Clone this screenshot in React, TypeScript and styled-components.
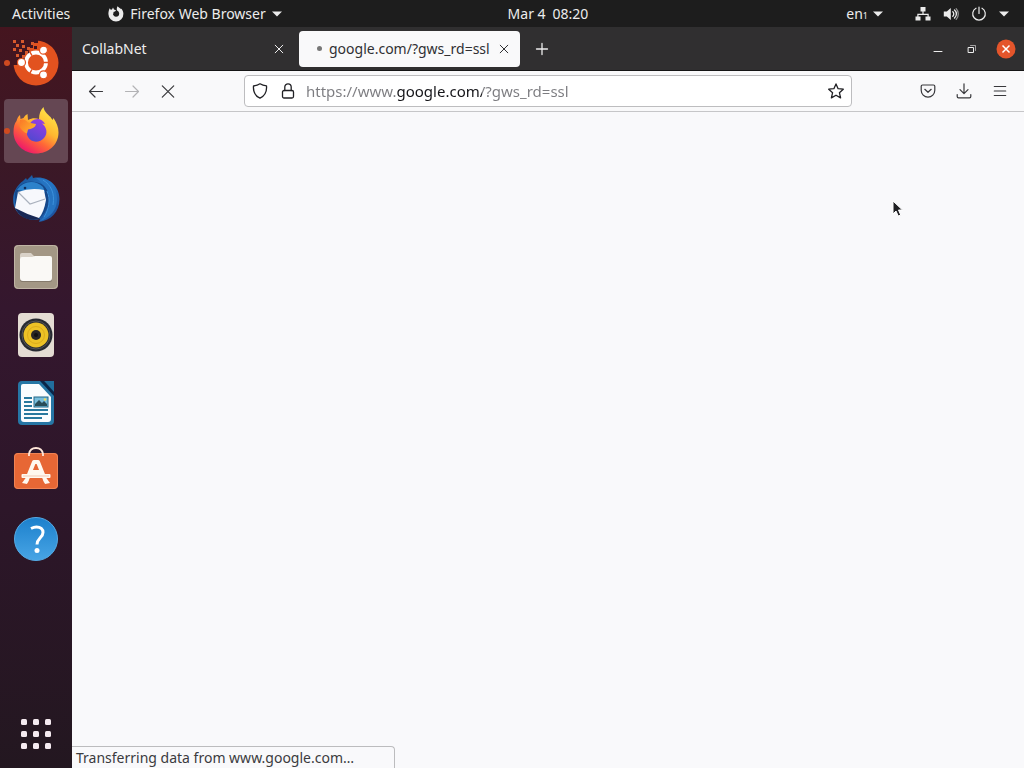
import React from "react";
import styled, { createGlobalStyle } from "styled-components";

const GlobalStyle = createGlobalStyle`
  *, *::before, *::after { box-sizing: border-box; }
  body { margin: 0; background: #f9f9fb; }
  body, button, input { font-family: "Noto Sans", "Open Sans", sans-serif; font-size: 14px; line-height: 20px; }
  button { margin: 0; padding: 0; border: 0; background: none; color: inherit; cursor: default; }
  svg { display: block; flex: none; }
`;

const Desktop = styled.div`
  display: flex;
  flex-direction: column;
  min-height: 100vh;
`;

const TopBar = styled.header`
  display: grid;
  grid-template-columns: 72px 1fr auto 1fr;
  align-items: center;
  height: 27px;
  background: #1d1d1d;
  color: #ececec;
`;

const TopLeft = styled.nav`
  grid-column: 1 / 3;
  display: flex;
  align-items: center;
  gap: 38px;
  padding-left: 12px;
`;

const TopRight = styled.div`
  display: flex;
  align-items: center;
  justify-content: flex-end;
  gap: 32px;
  padding-right: 15px;
`;

const TopButton = styled.button<{ $gap?: number }>`
  display: flex;
  align-items: center;
  gap: ${(p) => p.$gap ?? 6}px;
  white-space: nowrap;
`;

const Subscript = styled.span`
  font-size: 9px;
  line-height: 12px;
  padding-top: 4px;
`;

const Workspace = styled.div`
  display: flex;
  flex: 1;
`;

const Dock = styled.nav`
  display: flex;
  flex-direction: column;
  gap: 4px;
  width: 72px;
  padding: 4px 4px 2px;
  background: linear-gradient(180deg, #45151f 0%, #3b1826 18%, #34172e 38%, #2d1629 65%, #231720 100%);
`;

const DockItem = styled.button<{ $active?: boolean; $running?: boolean; $last?: boolean }>`
  position: relative;
  display: grid;
  place-items: center;
  height: 64px;
  border-radius: 4px;
  margin-top: ${(p) => (p.$last ? "auto" : "0")};
  background: ${(p) => (p.$active ? "#654753" : "transparent")};
  &::before {
    content: "";
    display: ${(p) => (p.$running ? "block" : "none")};
    position: absolute;
    left: 0;
    top: 29px;
    width: 6px;
    height: 6px;
    border-radius: 50%;
    background: #cf4a20;
  }
`;

const Browser = styled.main`
  display: flex;
  flex-direction: column;
  flex: 1;
  min-width: 0;
`;

const TitleBar = styled.div`
  display: flex;
  align-items: center;
  gap: 4px;
  height: 44px;
  padding: 0 6px 0 2px;
  background: #302f30;
  border-bottom: 1px solid #151515;
  color: #ededed;
`;

const Tab = styled.div<{ $active?: boolean }>`
  display: flex;
  align-items: center;
  gap: 2px;
  width: 221px;
  height: 36px;
  padding: 0 6px 0 8px;
  border-radius: 4px;
  background: ${(p) => (p.$active ? "#f9f9fa" : "transparent")};
  color: ${(p) => (p.$active ? "#303033" : "#ededed")};
`;

const TabLabel = styled.button`
  display: flex;
  align-items: center;
  flex: 1;
  min-width: 0;
  white-space: nowrap;
`;

const LoadingDot = styled.span`
  width: 5px;
  height: 5px;
  margin: 0 7px 0 10px;
  border-radius: 50%;
  background: #777;
`;

const IconButton = styled.button<{ $size?: number; $faded?: boolean }>`
  display: grid;
  place-items: center;
  flex: none;
  width: ${(p) => p.$size ?? 36}px;
  height: ${(p) => p.$size ?? 36}px;
  color: ${(p) => (p.$faded ? "#b3b3b5" : "inherit")};
`;

const WindowControls = styled.div`
  display: flex;
  gap: 10px;
  margin-left: auto;
`;

const Toolbar = styled.div`
  display: flex;
  align-items: center;
  height: 41px;
  padding: 0 6px;
  background: #f9f9fa;
  border-bottom: 1px solid #c6c6c8;
  color: #38383b;
`;

const AddressBar = styled.form`
  display: flex;
  align-items: center;
  flex: 1;
  height: 32px;
  margin: 0 58px;
  padding-left: 1px;
  border: 1px solid #bdbdbf;
  border-radius: 4px;
  background: #fff;
  color: #202024;
`;

const AddressInput = styled.input`
  flex: 1;
  min-width: 0;
  height: 24px;
  padding: 0 0 0 4px;
  border: 0;
  outline: 0;
  font-size: 15px;
  color: transparent;
  background: linear-gradient(90deg, #7c7c80 95px, #151519 95px, #151519 180px, #7c7c80 180px);
  background-clip: text;
  -webkit-background-clip: text;
`;

const Page = styled.section`
  display: flex;
  flex: 1;
  align-items: flex-end;
  background: #f9f9fb;
`;

const StatusPanel = styled.div`
  width: 323px;
  height: 22px;
  padding: 1px 4px 0;
  border: 1px solid #bcbcbe;
  border-width: 1px 1px 0 0;
  border-top-right-radius: 4px;
  color: #3b3b3e;
  white-space: nowrap;
`;

const Pointer = styled.svg`
  position: fixed;
  left: 891px;
  top: 199px;
  pointer-events: none;
`;

type GlyphProps = { children: React.ReactNode; size?: number; width?: number };

const Glyph = ({ children, size = 16, width = 1 }: GlyphProps) => (
  <svg width={size} height={size} viewBox="0 0 16 16" fill="none" stroke="currentColor" strokeWidth={width} strokeLinecap="round" strokeLinejoin="round" aria-hidden="true">
    {children}
  </svg>
);

const Caret = () => (
  <svg width="10" height="6" viewBox="0 0 10 6" fill="currentColor" aria-hidden="true">
    <path d="M0 .5h10L5 5.5z" />
  </svg>
);

const CrossSmall = () => (
  <Glyph><path d="M4.2 4.2l7.6 7.6M11.8 4.2l-7.6 7.6" /></Glyph>
);

const FirefoxSymbol = () => (
  <svg width="16" height="16" viewBox="0 0 16 16" fill="currentColor" aria-hidden="true">
    <path d="M1.800 2.200l.9 1.500 1.300-.3L5 1.500l1 1.900 2 .8c-.4 1.200-1.600 1.500-2.700 1.700l.4 1.200-.8 1c.4 1.700 1.600 2.600 3.100 2.600 1.900 0 3.200-1.300 3.200-3 0-1.600-.8-2.600-2.200-3.300C8.600 3 8.800 1.500 9.600.3c1 1.300 2.300 1.700 3.300 2.700l.6-.2c1.200 1.500 1.900 3.200 1.900 5A7.500 7.500 0 0 1 8 15.500 7.600 7.600 0 0 1 .4 8C.4 5.800.8 3.700 1.800 2.200z" />
  </svg>
);

const NetworkSymbol = () => (
  <svg width="16" height="16" viewBox="0 0 16 16" fill="currentColor" aria-hidden="true">
    <path d="M5.500 1h5v4.500h-5zM.5 10.500h5V14.500h-5zM10.500 10.500h5V14.500h-5zM7.400 5.500h1.200v2.300H13.700v3h-1.200V9H3.500v1.800H2.300v-3h5.100z" />
  </svg>
);

const VolumeSymbol = () => (
  <Glyph width={1.3}>
    <path d="M.8 5.500h3l4-3.500v12l-4-3.500h-3z" fill="currentColor" stroke="none" />
    <path d="M9.800 5.800a3 3 0 0 1 0 4.400M11.500 4a5.200 5.200 0 0 1 0 8" />
    <path d="M13.200 2.800a7.500 7.500 0 0 1 0 10.400" opacity=".55" />
  </Glyph>
);

const PowerSymbol = () => (
  <Glyph width={1.2}><path d="M8 1v6.500M5 2.200a6.300 6.300 0 1 0 6 0" /></Glyph>
);

const UbuntuIcon = () => (
  <svg width="56" height="48" viewBox="0 0 56 48" aria-hidden="true">
    <circle cx="28" cy="24" r="22.500" fill="#e2521f" />
    <path d="M4 0h26v4h-5v5h-3v6h-5v5h-7v6H3z" fill="#421520" />
    <g fill="#d8592c">
      {[[5, 1], [13, 1], [8, 5], [14, 6], [23, 3], [5, 9], [11, 10], [17, 12], [8, 15], [14, 16], [19, 8]].map(([x, y]) => (
        <rect key={`${x}-${y}`} x={x} y={y} width="3" height="3" />
      ))}
    </g>
    <g fill="#421520">
      <rect x="21" y="13" width="3" height="3" /><rect x="26" y="7" width="3" height="3" />
    </g>
    <circle cx="28" cy="23.500" r="10" fill="#e2521f" stroke="#fff" strokeWidth="3.800" />
    <g stroke="#e2521f" strokeWidth="1.400">
      <path d="M36 23.500H41M24 16.600l-3-5.200M24 30.400l-3 5.200" />
    </g>
    <g fill="#fff" stroke="#e2521f" strokeWidth="1.200">
      <circle cx="13.500" cy="23.500" r="4" /><circle cx="35.500" cy="11.200" r="4" /><circle cx="35.500" cy="35.800" r="4" />
    </g>
  </svg>
);

const FirefoxIcon = () => (
  <svg width="48" height="48" viewBox="0 0 48 48" aria-hidden="true">
    <defs>
      <linearGradient id="ffBody" x1=".85" y1=".05" x2=".25" y2=".95">
        <stop offset="0" stopColor="#ffe94a" /><stop offset=".42" stopColor="#ffb730" /><stop offset=".68" stopColor="#ff6637" /><stop offset="1" stopColor="#ee186b" />
      </linearGradient>
      <linearGradient id="ffGlobe" x1=".8" y1="0" x2=".3" y2="1">
        <stop offset="0" stopColor="#9a3de4" /><stop offset="1" stopColor="#5148d0" />
      </linearGradient>
      <linearGradient id="ffHead" x1="0" y1="0" x2="1" y2=".6">
        <stop offset="0" stopColor="#fa7627" /><stop offset="1" stopColor="#ffb12d" />
      </linearGradient>
    </defs>
    <path d="M4.500 14c.8-3 2-5 3.500-6l.5 4 3-1c1-2 2.500-3.300 4-4l.5 6c4-2 7-2 11-1 0-5 1.500-9 4.500-12 .5 4.500 4 7 7 10l2 3 1-2c3 4.500 5 9 5 14.500C46.500 38 36 46.500 24 46.500S1.500 37 1.500 25c0-5 1-8.500 3-11z" fill="url(#ffBody)" />
    <path d="M20 14c4-3 10-3 13 3l-3-.5c5 4 6 10 2 14.500-4 5-13 5-16-1-3-5 0-12 4-16z" fill="url(#ffGlobe)" />
    <path d="M8 13c3-1.500 6 0 8 2.500l8 1.500c-.5 4-5 5-8 5.500l-1 4c-3-1-6-4-7.500-7z" fill="url(#ffHead)" />
  </svg>
);

const ThunderbirdIcon = () => (
  <svg width="48" height="48" viewBox="0 0 48 48" aria-hidden="true">
    <defs>
      <linearGradient id="tbBlue" x1="0" y1="0" x2="1" y2="1">
        <stop offset="0" stopColor="#174a8c" /><stop offset=".5" stopColor="#2478c8" /><stop offset="1" stopColor="#1b458f" />
      </linearGradient>
    </defs>
    <path d="M11 6l3-3 1 2L20 0l1 3C36 0 47.500 11 47.500 24S39 45.500 27 47l1-3C15 47 5 40 2 31-1 20 4 11 11 6z" fill="url(#tbBlue)" />
    <path d="M3 17C7 9 15 5 23 7c9 1 15 8 14 18-1 8-4 14-10 19C15 46 5 39 3 31z" fill="#16488a" />
    <path d="M5 15c6-9 18-11 26-3l2 5-22-1z" fill="#2c82cb" />
    <path d="M24 3c12 0 21 9 21 21 0 11-7 19-17 22 9-8 12-20 8-29-2-6-6-9-12-14z" fill="#2674c2" />
    <path d="M31 5c8 5 12 13 10 25M35 16c4 9 2 18-3 26" fill="none" stroke="#3c91dc" />
    <path d="M3 32l25 11C17 48 7 42 3 32z" fill="#182855" />
    <path d="M6 17q13-5 26-2l2 10q-2 12-7 18Q14 39 3 33z" fill="#f7f8fc" />
    <path d="M6 17l12 12 15-5" fill="none" stroke="#aab1bd" strokeWidth="1.200" />
    <circle cx="13" cy="13" r="1.300" fill="#122e5b" />
  </svg>
);

const FilesIcon = () => (
  <svg width="48" height="48" viewBox="0 0 48 48" aria-hidden="true">
    <rect x="2" y="2" width="44" height="44" rx="4" fill="#a39785" />
    <rect x="2.500" y="2.500" width="43" height="43" rx="4" fill="none" stroke="#c0b5a5" />
    <path d="M8 12q0-2 2-2h9l4 4h14v8H8z" fill="#d9d2c8" />
    <rect x="8" y="15" width="32" height="24" rx="2" fill="#857a6c" />
    <path d="M8 16q0-2 2-2h10l3-1h15q2 0 2 2v20q0 3-3 3H11q-3 0-3-3z" fill="#faf9f6" />
  </svg>
);

const RhythmboxIcon = () => (
  <svg width="48" height="48" viewBox="0 0 48 48" aria-hidden="true">
    <rect x="6" y="2" width="36" height="44" rx="4" fill="#e4dcd3" />
    <circle cx="24" cy="24" r="16.500" fill="#272a32" />
    <circle cx="24" cy="24" r="14" fill="none" stroke="#555" />
    <circle cx="24" cy="24" r="12.500" fill="#edc226" />
    <circle cx="24" cy="24" r="8.500" fill="none" stroke="#dcac1c" />
    <circle cx="24" cy="24" r="5" fill="#292625" /><circle cx="24" cy="24" r="2" fill="#111" />
  </svg>
);

const WriterIcon = () => (
  <svg width="48" height="48" viewBox="0 0 48 48" aria-hidden="true">
    <path d="M10 2h22l10 11v29q0 4-4 4H10q-4 0-4-4V6q0-4 4-4z" fill="#2676a5" />
    <path d="M32 2h10v11z" fill="#216e9d" /><path d="M28 2h4l10 11v4z" fill="#0b2548" />
    <path d="M11 5h16l12 13v22q0 3-3 3H12q-3 0-3-3V7q0-2 2-2z" fill="#fafcfe" />
    <path d="M12 19h8M12 23h8M12 27h8M12 31h24M12 35h24M12 39h18" stroke="#28789e" strokeWidth="2" />
    <rect x="22" y="18" width="14" height="10" fill="#79bedc" stroke="#236988" />
    <path d="M23 27v-2l4-4 3 3 2-2 3 3v2z" fill="#274c58" /><circle cx="33" cy="20.500" r="1.300" fill="#eddb61" />
  </svg>
);

const SoftwareIcon = () => (
  <svg width="48" height="48" viewBox="0 0 48 48" aria-hidden="true">
    <rect x="2" y="6" width="44" height="36" rx="4" fill="#e76735" />
    <rect x="2.500" y="6.500" width="43" height="35" rx="3.500" fill="none" stroke="#f08354" />
    <path d="M17 9V7q1-6 7-6t7 6v2" fill="none" stroke="#ffe6d8" strokeWidth="1.800" />
    <path d="M14 35l8-20h4l8 20M18 25h12" fill="none" stroke="#fff8ef" strokeWidth="4" strokeLinejoin="round" />
    <rect x="9.500" y="27" width="29" height="4" rx="1" fill="#fff8ef" />
    <path d="M10 36l3-4h4l-2 5zM38 36l-3-4h-4l2 5z" fill="#fff8ef" />
    <path d="M11 29h26" stroke="#edb79e" strokeWidth=".7" />
  </svg>
);

const HelpIcon = () => (
  <svg width="48" height="48" viewBox="0 0 48 48" aria-hidden="true">
    <defs><linearGradient id="help" x1="0" y1="0" x2="0" y2="1"><stop stopColor="#1c80cc" /><stop offset="1" stopColor="#48a5e5" /></linearGradient></defs>
    <circle cx="24" cy="24" r="21.500" fill="url(#help)" stroke="#55aae5" />
    <path d="M19 13.500q3-1.500 5.500-1.500c4 0 6.500 2.200 6.500 5.500 0 5-6 5.800-6 12" fill="none" stroke="#fff" strokeWidth="3" />
    <circle cx="25" cy="35.500" r="2.500" fill="#fff" />
  </svg>
);

const AppGridIcon = () => (
  <svg width="48" height="48" viewBox="0 0 48 48" fill="#f5eaf0" aria-hidden="true">
    {[9, 21, 33].flatMap((y) => [9, 21, 33].map((x) => <rect key={`${x}-${y}`} x={x} y={y} width="6" height="6" rx="1.500" />))}
  </svg>
);

const dockApps = [
  { name: "Ubuntu Desktop", Icon: UbuntuIcon, running: true },
  { name: "Firefox Web Browser", Icon: FirefoxIcon, running: true, active: true },
  { name: "Thunderbird Mail", Icon: ThunderbirdIcon },
  { name: "Files", Icon: FilesIcon },
  { name: "Rhythmbox", Icon: RhythmboxIcon },
  { name: "LibreOffice Writer", Icon: WriterIcon },
  { name: "Ubuntu Software", Icon: SoftwareIcon },
  { name: "Help", Icon: HelpIcon },
];

export default function App() {
  return (
    <Desktop>
      <GlobalStyle />
      <TopBar>
        <TopLeft aria-label="System">
          <TopButton>Activities</TopButton>
          <TopButton><FirefoxSymbol />Firefox Web Browser<Caret /></TopButton>
        </TopLeft>
        <TopButton $gap={7}><span>Mar 4</span><span>08:20</span></TopButton>
        <TopRight>
          <TopButton $gap={5} aria-label="Keyboard layout">
            <span>en<Subscript>1</Subscript></span><Caret />
          </TopButton>
          <TopButton $gap={12} aria-label="System menu">
            <NetworkSymbol /><VolumeSymbol /><PowerSymbol /><Caret />
          </TopButton>
        </TopRight>
      </TopBar>
      <Workspace>
        <Dock aria-label="Dock">
          {dockApps.map(({ name, Icon, running, active }) => (
            <DockItem key={name} aria-label={name} $running={running} $active={active}><Icon /></DockItem>
          ))}
          <DockItem aria-label="Show Applications" $last><AppGridIcon /></DockItem>
        </Dock>
        <Browser>
          <TitleBar>
            <Tab>
              <TabLabel>CollabNet</TabLabel>
              <IconButton $size={20} aria-label="Close CollabNet"><CrossSmall /></IconButton>
            </Tab>
            <Tab $active>
              <TabLabel><LoadingDot />google.com/?gws_rd=ssl</TabLabel>
              <IconButton $size={20} aria-label="Close google.com"><CrossSmall /></IconButton>
            </Tab>
            <IconButton aria-label="New tab"><Glyph width={1.3}><path d="M8 2.500v11M2.500 8h11" /></Glyph></IconButton>
            <WindowControls>
              <IconButton $size={24} aria-label="Minimize"><Glyph><path d="M4 10.500h8" /></Glyph></IconButton>
              <IconButton $size={24} aria-label="Restore"><Glyph><path d="M4.500 6.500h5v5h-5z" /><path d="M6.500 4.500h5v5" opacity=".6" /></Glyph></IconButton>
              <IconButton $size={24} aria-label="Close window">
                <svg width="20" height="20" viewBox="0 0 20 20" aria-hidden="true">
                  <circle cx="10" cy="10" r="9.500" fill="#e4552b" />
                  <path d="M6.500 6.500l7 7M13.500 6.500l-7 7" stroke="#fff" strokeWidth="1.500" />
                </svg>
              </IconButton>
            </WindowControls>
          </TitleBar>
          <Toolbar>
            <IconButton aria-label="Back"><Glyph width={1.2}><path d="M14.500 8.500h-13M7 3L1.500 8.500 7 14" /></Glyph></IconButton>
            <IconButton aria-label="Forward" $faded><Glyph width={1.2}><path d="M1.500 8.500h13M9 3l5.500 5.500L9 14" /></Glyph></IconButton>
            <IconButton aria-label="Stop"><Glyph width={1.2}><path d="M2.300 2.800l11.400 11.400M13.700 2.800L2.300 14.200" /></Glyph></IconButton>
            <AddressBar onSubmit={(e) => e.preventDefault()}>
              <IconButton $size={28} type="button" aria-label="Tracking protection">
                <Glyph width={1.3}><path d="M8 .8c2 1.300 4 1.900 6.500 2.100C15 8.500 13 12.800 8 15.200 3 12.800 1 8.500 1.500 2.900 4 2.700 6 2.100 8 .8z" /></Glyph>
              </IconButton>
              <IconButton $size={28} type="button" aria-label="Site security">
                <Glyph width={1.3}><rect x="2.500" y="7.500" width="11" height="7.500" rx="1.500" /><path d="M4.800 7.500V4a3.200 3.200 0 0 1 6.400 0v3.500" /></Glyph>
              </IconButton>
              <AddressInput aria-label="Address" defaultValue="https://www.google.com/?gws_rd=ssl" spellCheck={false} />
              <IconButton $size={30} type="button" aria-label="Bookmark this page">
                <Glyph width={1.3}><path d="M8 .9l2.100 4.800 5.200.5-3.900 3.500 1.200 5.200L8 12.200l-4.600 2.700 1.200-5.200L.7 6.200l5.200-.5z" /></Glyph>
              </IconButton>
            </AddressBar>
            <IconButton aria-label="Save to Pocket">
              <Glyph width={1.2}><path d="M2.500 2h11q1.300 0 1.300 1.300v4a6.800 6.800 0 0 1-13.600 0v-4Q1.200 2 2.500 2zM4.800 6.300L8 9.300l3.200-3" /></Glyph>
            </IconButton>
            <IconButton aria-label="Downloads">
              <Glyph width={1.2}><path d="M8 .8v9.700M4 6.700l4 4 4-4M1.200 11.500v2q0 1.300 1.300 1.300h11q1.300 0 1.300-1.300v-2" /></Glyph>
            </IconButton>
            <IconButton aria-label="Open application menu"><Glyph width={1.2}><path d="M2.300 3.500h11.400M2.300 8h11.400M2.300 12.500h11.400" /></Glyph></IconButton>
          </Toolbar>
          <Page aria-label="Page content">
            <StatusPanel role="status">Transferring data from www.google.com…</StatusPanel>
          </Page>
        </Browser>
      </Workspace>
      <Pointer width="14" height="20" viewBox="0 0 14 20" aria-hidden="true">
        <path d="M2 2v13l3-3 2.200 5 2.500-1-2.200-5h4z" fill="#202023" stroke="#fff" />
      </Pointer>
    </Desktop>
  );
}
